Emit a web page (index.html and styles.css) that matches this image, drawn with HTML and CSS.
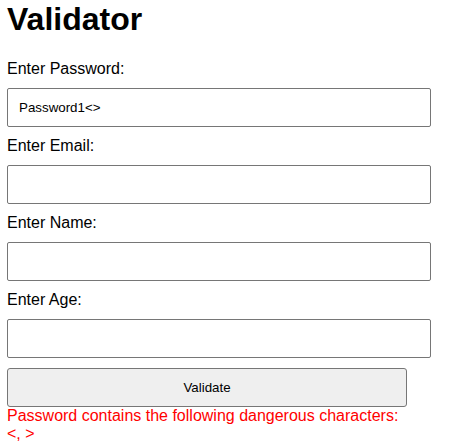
FILE: index.html
```html
<!DOCTYPE html>
<html>
<head>
<meta charset="utf-8">
<link rel="stylesheet" href="styles.css">
</head>
<body>
<div class="page">
  <h1 class="title">Validator</h1>
  <form class="form">
    <label class="label" for="pw">Enter Password:</label>
    <input class="field" id="pw" type="text" value="Password1&lt;&gt;">
    <label class="label" for="em">Enter Email:</label>
    <input class="field" id="em" type="text">
    <label class="label" for="nm">Enter Name:</label>
    <input class="field" id="nm" type="text">
    <label class="label" for="ag">Enter Age:</label>
    <input class="field" id="ag" type="text">
    <button class="btn" type="button">Validate</button>
    <div class="error">Password contains the following dangerous characters: &lt;, &gt;</div>
  </form>
</div>
</body>
</html>
```
FILE: styles.css
```css
html, body {
  margin: 0;
  padding: 0;
  background: #fff;
}
.page {
  padding: 0 7px;
  font-family: "Liberation Sans", Arial, sans-serif;
  color: #000;
}
.title {
  margin: 0 0 22px;
  font-size: 32px;
  line-height: 38px;
  font-weight: bold;
}
.form {
  display: flex;
  flex-direction: column;
  align-items: flex-start;
}
.label {
  font-size: 16px;
  line-height: 18px;
  margin-bottom: 10px;
}
.field {
  box-sizing: border-box;
  width: 424px;
  height: 39px;
  margin: 0 0 10px;
  padding: 0 11px;
  border: 1px solid #767676;
  border-radius: 2px;
  font-family: "Liberation Sans", Arial, sans-serif;
  font-size: 13.33px;
  color: #000;
  background: #fff;
}
.btn {
  box-sizing: border-box;
  width: 400px;
  height: 39px;
  margin: 0;
  border: 1px solid #767676;
  border-radius: 3px;
  background: #efefef;
  font-family: "Liberation Sans", Arial, sans-serif;
  font-size: 13.33px;
  color: #000;
}
.error {
  width: 400px;
  color: #ff0000;
  font-size: 16px;
  line-height: 18px;
}
```
